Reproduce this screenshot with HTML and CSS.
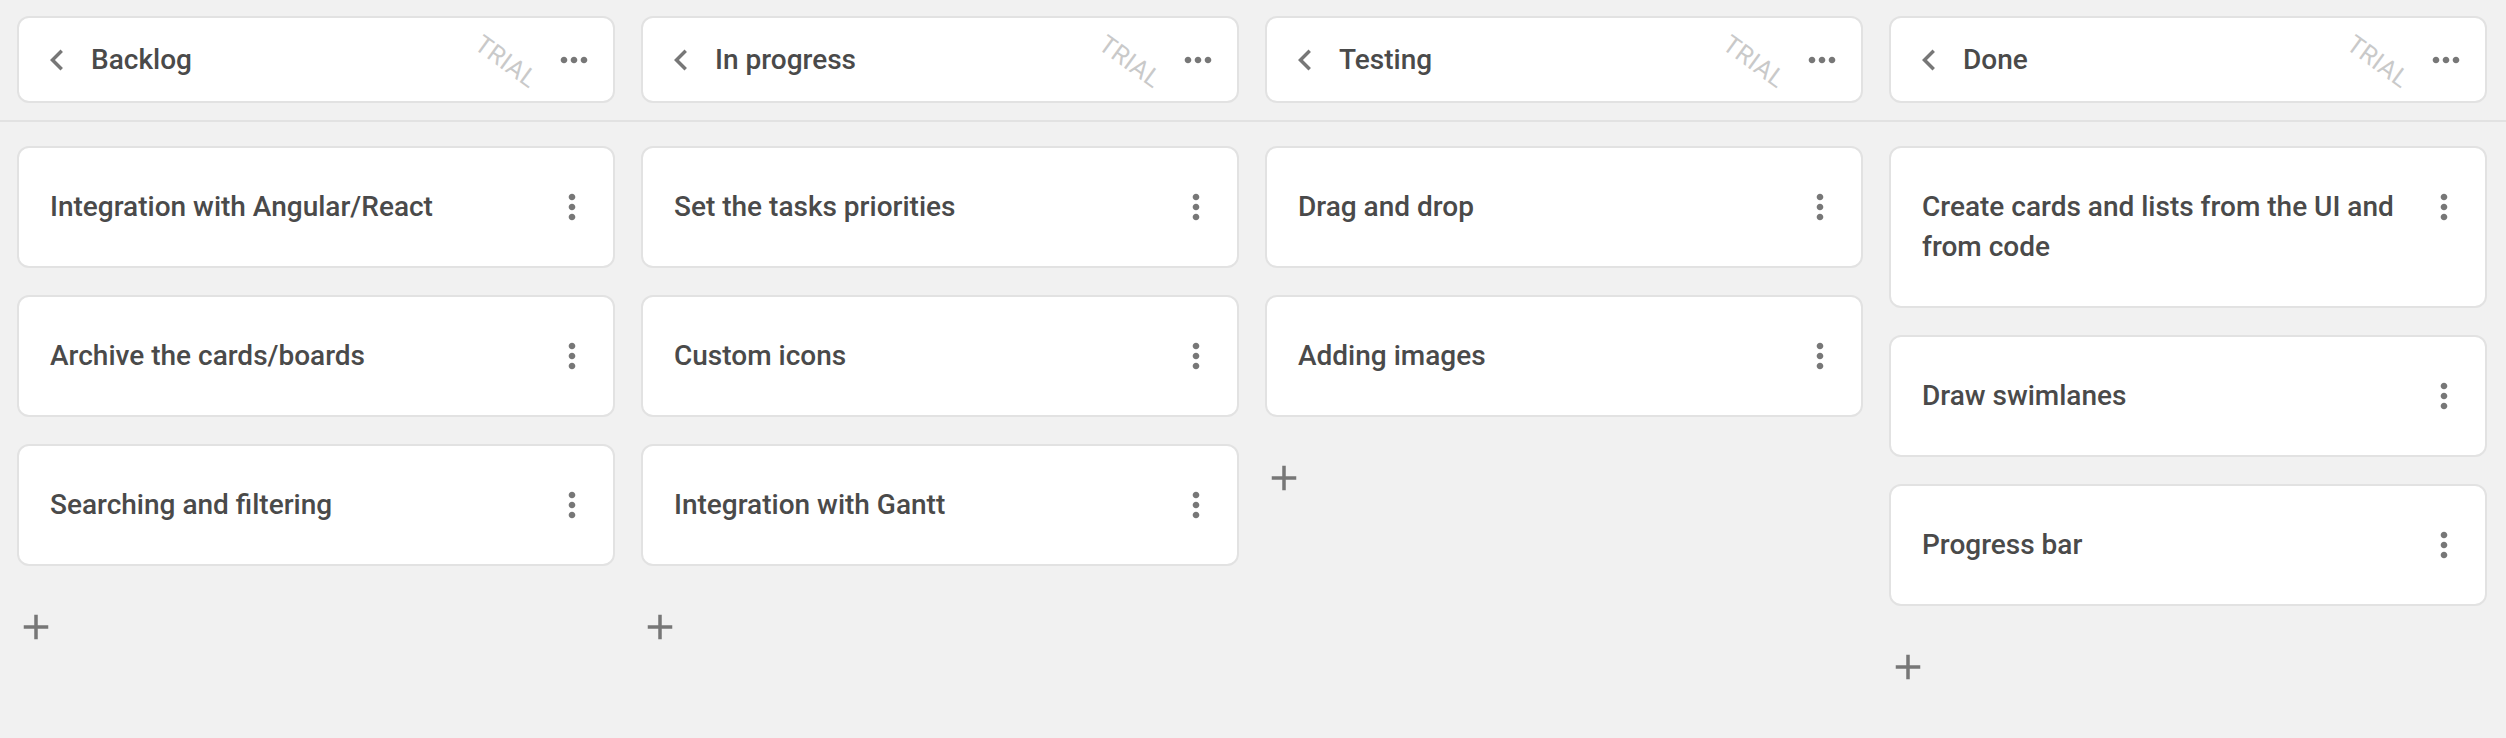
FILE: index.html
```html
<!DOCTYPE html>
<html lang="en">
<head>
<meta charset="utf-8">
<title>Kanban board</title>
<link rel="stylesheet" href="styles.css">
</head>
<body>
<div class="board">
  <div class="header-row">
    <div class="list-header">
      <svg class="chev" viewBox="0 0 24 24"><path d="M15.41 7.41L14 6l-6 6 6 6 1.41-1.41L10.83 12z"/></svg>
      <span class="list-title">Backlog</span>
      <span class="trial">TRIAL</span>
      <svg class="more-h" viewBox="0 0 24 24"><path d="M6 10c-1.1 0-2 .9-2 2s.9 2 2 2 2-.9 2-2-.9-2-2-2zm12 0c-1.1 0-2 .9-2 2s.9 2 2 2 2-.9 2-2-.9-2-2-2zm-6 0c-1.1 0-2 .9-2 2s.9 2 2 2 2-.9 2-2-.9-2-2-2z"/></svg>
    </div>
    <div class="list-header">
      <svg class="chev" viewBox="0 0 24 24"><path d="M15.41 7.41L14 6l-6 6 6 6 1.41-1.41L10.83 12z"/></svg>
      <span class="list-title">In progress</span>
      <span class="trial">TRIAL</span>
      <svg class="more-h" viewBox="0 0 24 24"><path d="M6 10c-1.1 0-2 .9-2 2s.9 2 2 2 2-.9 2-2-.9-2-2-2zm12 0c-1.1 0-2 .9-2 2s.9 2 2 2 2-.9 2-2-.9-2-2-2zm-6 0c-1.1 0-2 .9-2 2s.9 2 2 2 2-.9 2-2-.9-2-2-2z"/></svg>
    </div>
    <div class="list-header">
      <svg class="chev" viewBox="0 0 24 24"><path d="M15.41 7.41L14 6l-6 6 6 6 1.41-1.41L10.83 12z"/></svg>
      <span class="list-title">Testing</span>
      <span class="trial">TRIAL</span>
      <svg class="more-h" viewBox="0 0 24 24"><path d="M6 10c-1.1 0-2 .9-2 2s.9 2 2 2 2-.9 2-2-.9-2-2-2zm12 0c-1.1 0-2 .9-2 2s.9 2 2 2 2-.9 2-2-.9-2-2-2zm-6 0c-1.1 0-2 .9-2 2s.9 2 2 2 2-.9 2-2-.9-2-2-2z"/></svg>
    </div>
    <div class="list-header">
      <svg class="chev" viewBox="0 0 24 24"><path d="M15.41 7.41L14 6l-6 6 6 6 1.41-1.41L10.83 12z"/></svg>
      <span class="list-title">Done</span>
      <span class="trial">TRIAL</span>
      <svg class="more-h" viewBox="0 0 24 24"><path d="M6 10c-1.1 0-2 .9-2 2s.9 2 2 2 2-.9 2-2-.9-2-2-2zm12 0c-1.1 0-2 .9-2 2s.9 2 2 2 2-.9 2-2-.9-2-2-2zm-6 0c-1.1 0-2 .9-2 2s.9 2 2 2 2-.9 2-2-.9-2-2-2z"/></svg>
    </div>
  </div>

  <div class="columns">
    <div class="column">
      <div class="card"><span class="card-text">Integration with Angular/React</span><svg class="more-v" viewBox="0 0 24 24"><path d="M12 8c1.1 0 2-.9 2-2s-.9-2-2-2-2 .9-2 2 .9 2 2 2zm0 2c-1.1 0-2 .9-2 2s.9 2 2 2 2-.9 2-2-.9-2-2-2zm0 6c-1.1 0-2 .9-2 2s.9 2 2 2 2-.9 2-2-.9-2-2-2z"/></svg></div>
      <div class="card"><span class="card-text">Archive the cards/boards</span><svg class="more-v" viewBox="0 0 24 24"><path d="M12 8c1.1 0 2-.9 2-2s-.9-2-2-2-2 .9-2 2 .9 2 2 2zm0 2c-1.1 0-2 .9-2 2s.9 2 2 2 2-.9 2-2-.9-2-2-2zm0 6c-1.1 0-2 .9-2 2s.9 2 2 2 2-.9 2-2-.9-2-2-2z"/></svg></div>
      <div class="card"><span class="card-text">Searching and filtering</span><svg class="more-v" viewBox="0 0 24 24"><path d="M12 8c1.1 0 2-.9 2-2s-.9-2-2-2-2 .9-2 2 .9 2 2 2zm0 2c-1.1 0-2 .9-2 2s.9 2 2 2 2-.9 2-2-.9-2-2-2zm0 6c-1.1 0-2 .9-2 2s.9 2 2 2 2-.9 2-2-.9-2-2-2z"/></svg></div>
      <svg class="add" viewBox="0 0 24 24"><path d="M19 13h-6v6h-2v-6H5v-2h6V5h2v6h6v2z"/></svg>
    </div>
    <div class="column">
      <div class="card"><span class="card-text">Set the tasks priorities</span><svg class="more-v" viewBox="0 0 24 24"><path d="M12 8c1.1 0 2-.9 2-2s-.9-2-2-2-2 .9-2 2 .9 2 2 2zm0 2c-1.1 0-2 .9-2 2s.9 2 2 2 2-.9 2-2-.9-2-2-2zm0 6c-1.1 0-2 .9-2 2s.9 2 2 2 2-.9 2-2-.9-2-2-2z"/></svg></div>
      <div class="card"><span class="card-text">Custom icons</span><svg class="more-v" viewBox="0 0 24 24"><path d="M12 8c1.1 0 2-.9 2-2s-.9-2-2-2-2 .9-2 2 .9 2 2 2zm0 2c-1.1 0-2 .9-2 2s.9 2 2 2 2-.9 2-2-.9-2-2-2zm0 6c-1.1 0-2 .9-2 2s.9 2 2 2 2-.9 2-2-.9-2-2-2z"/></svg></div>
      <div class="card"><span class="card-text">Integration with Gantt</span><svg class="more-v" viewBox="0 0 24 24"><path d="M12 8c1.1 0 2-.9 2-2s-.9-2-2-2-2 .9-2 2 .9 2 2 2zm0 2c-1.1 0-2 .9-2 2s.9 2 2 2 2-.9 2-2-.9-2-2-2zm0 6c-1.1 0-2 .9-2 2s.9 2 2 2 2-.9 2-2-.9-2-2-2z"/></svg></div>
      <svg class="add" viewBox="0 0 24 24"><path d="M19 13h-6v6h-2v-6H5v-2h6V5h2v6h6v2z"/></svg>
    </div>
    <div class="column">
      <div class="card"><span class="card-text">Drag and drop</span><svg class="more-v" viewBox="0 0 24 24"><path d="M12 8c1.1 0 2-.9 2-2s-.9-2-2-2-2 .9-2 2 .9 2 2 2zm0 2c-1.1 0-2 .9-2 2s.9 2 2 2 2-.9 2-2-.9-2-2-2zm0 6c-1.1 0-2 .9-2 2s.9 2 2 2 2-.9 2-2-.9-2-2-2z"/></svg></div>
      <div class="card"><span class="card-text">Adding images</span><svg class="more-v" viewBox="0 0 24 24"><path d="M12 8c1.1 0 2-.9 2-2s-.9-2-2-2-2 .9-2 2 .9 2 2 2zm0 2c-1.1 0-2 .9-2 2s.9 2 2 2 2-.9 2-2-.9-2-2-2zm0 6c-1.1 0-2 .9-2 2s.9 2 2 2 2-.9 2-2-.9-2-2-2z"/></svg></div>
      <svg class="add" viewBox="0 0 24 24"><path d="M19 13h-6v6h-2v-6H5v-2h6V5h2v6h6v2z"/></svg>
    </div>
    <div class="column">
      <div class="card"><span class="card-text">Create cards and lists from the UI and from code</span><svg class="more-v" viewBox="0 0 24 24"><path d="M12 8c1.1 0 2-.9 2-2s-.9-2-2-2-2 .9-2 2 .9 2 2 2zm0 2c-1.1 0-2 .9-2 2s.9 2 2 2 2-.9 2-2-.9-2-2-2zm0 6c-1.1 0-2 .9-2 2s.9 2 2 2 2-.9 2-2-.9-2-2-2z"/></svg></div>
      <div class="card"><span class="card-text">Draw swimlanes</span><svg class="more-v" viewBox="0 0 24 24"><path d="M12 8c1.1 0 2-.9 2-2s-.9-2-2-2-2 .9-2 2 .9 2 2 2zm0 2c-1.1 0-2 .9-2 2s.9 2 2 2 2-.9 2-2-.9-2-2-2zm0 6c-1.1 0-2 .9-2 2s.9 2 2 2 2-.9 2-2-.9-2-2-2z"/></svg></div>
      <div class="card"><span class="card-text">Progress bar</span><svg class="more-v" viewBox="0 0 24 24"><path d="M12 8c1.1 0 2-.9 2-2s-.9-2-2-2-2 .9-2 2 .9 2 2 2zm0 2c-1.1 0-2 .9-2 2s.9 2 2 2 2-.9 2-2-.9-2-2-2zm0 6c-1.1 0-2 .9-2 2s.9 2 2 2 2-.9 2-2-.9-2-2-2z"/></svg></div>
      <svg class="add" viewBox="0 0 24 24"><path d="M19 13h-6v6h-2v-6H5v-2h6V5h2v6h6v2z"/></svg>
    </div>
  </div>
</div>
</body>
</html>
```

FILE: styles.css
```css
html, body {
  margin: 0;
  padding: 0;
  background: #f1f1f1;
  font-family: Roboto, "Liberation Sans", sans-serif;
  color: #4a4a4a;
}

.board {
  width: 2506px;
  min-height: 738px;
}

.header-row {
  display: grid;
  grid-template-columns: repeat(4, 1fr);
  gap: 26px;
  padding: 16px 19px 17px 17px;
  border-bottom: 2px solid #e2e2e2;
}

.list-header {
  position: relative;
  display: flex;
  align-items: center;
  height: 83px;
  padding: 0 19px 0 17px;
  background: #fff;
  border: 2px solid #e2e2e2;
  border-radius: 12px;
}

.chev {
  width: 42px;
  height: 42px;
  fill: #777;
  flex: none;
}

.list-title {
  margin-left: 13px;
  font-size: 28px;
  font-weight: 500;
  line-height: 40px;
  flex: 1;
}

.trial {
  position: absolute;
  right: 72px;
  top: 30px;
  font-size: 25px;
  line-height: 28px;
  color: #c9c9c9;
  transform: rotate(36deg);
  letter-spacing: 0.5px;
}

.more-h {
  width: 40px;
  height: 40px;
  fill: #777;
  flex: none;
}

.columns {
  display: grid;
  grid-template-columns: repeat(4, 1fr);
  gap: 26px;
  padding: 24px 19px 0 17px;
  align-items: start;
}

.column {
  display: flex;
  flex-direction: column;
  gap: 27px;
}

.card {
  display: flex;
  align-items: flex-start;
  padding: 39px 21px 39px 31px;
  background: #fff;
  border: 2px solid #e2e2e2;
  border-radius: 12px;
}

.card-text {
  flex: 1;
  font-size: 28px;
  font-weight: 500;
  line-height: 40px;
  padding-right: 8px;
}

.more-v {
  width: 40px;
  height: 40px;
  fill: #777;
  flex: none;
}

.add {
  width: 42px;
  height: 42px;
  fill: #777;
  margin-top: 13px;
  margin-left: -2px;
}
```
